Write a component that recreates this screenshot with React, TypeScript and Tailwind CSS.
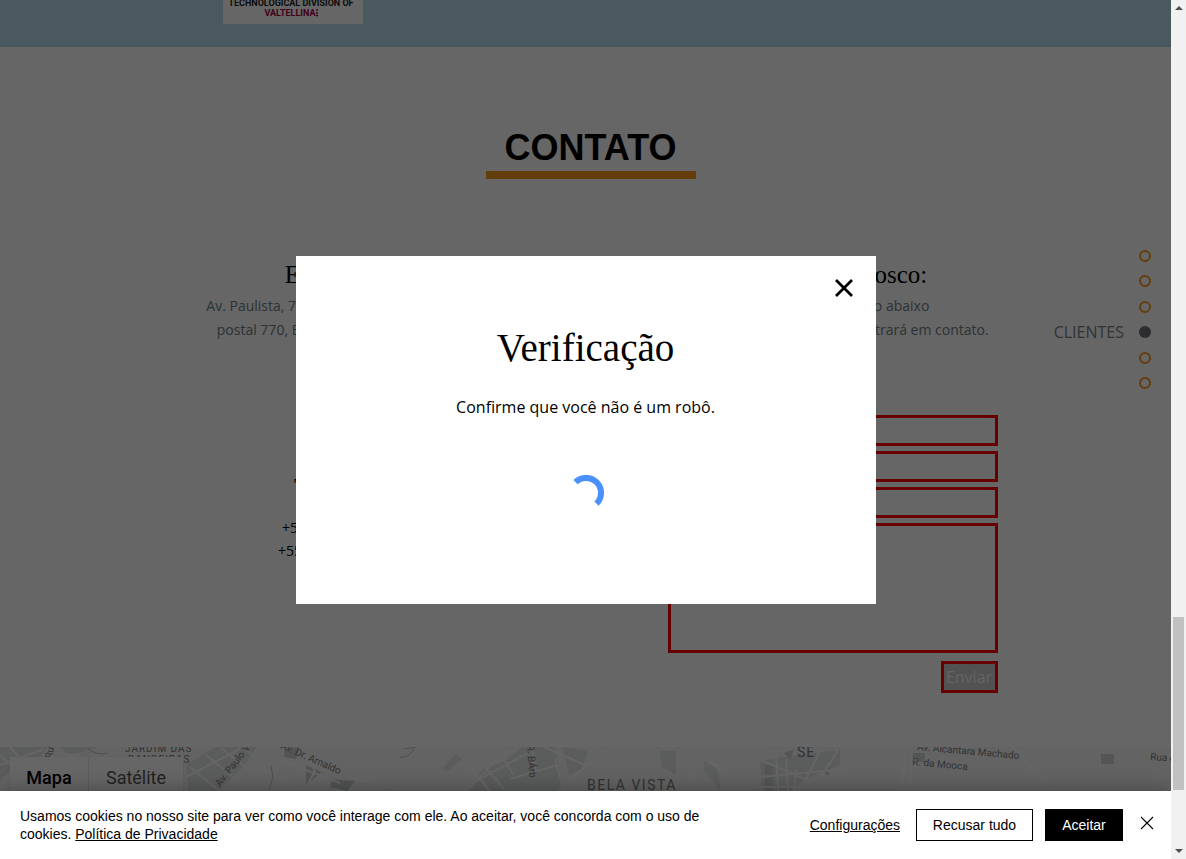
import React from "react";

const sections = ["HOME", "SOBRE", "SERVIÇOS", "CLIENTES", "CONTATO", "MAPA"];

function PartnerStrip() {
  return (
    <section className="h-[47px] bg-[#b9dfef]">
      <div className="mx-auto w-[726px] max-w-full">
        <div className="h-6 w-[140px] bg-white">
          <svg viewBox="0 0 140 24" className="h-6 w-[140px]" fontFamily="Roboto, sans-serif" fontWeight="700" textAnchor="middle">
            <text x="68" y="6" fontSize="9" fill="#222222">TECHNOLOGICAL DIVISION OF</text>
            <text x="67" y="16" fontSize="9" fill="#a8003c">VALTELLINA</text>
            <path d="M93 10h2M93 13h2M93 15.500h2" stroke="#a8003c" strokeWidth="1.500" />
          </svg>
        </div>
      </div>
    </section>
  );
}

const heading = "font-['Liberation_Serif',serif] text-[25px] leading-8 text-black";
const copy = "mt-[3px] whitespace-nowrap text-sm leading-6 text-[#6e8087]";
const field = "block w-full border-[3px] border-[#ff0000] bg-transparent px-2 text-sm";

function Contact() {
  return (
    <section className="h-[700px] pt-[78px]">
      <div className="pl-[10px]">
        <h1 className="mx-auto w-[210px] border-b-8 border-[#fa981f] text-center font-['Liberation_Sans',sans-serif] text-4xl leading-[46px] font-bold text-black">
          CONTATO
        </h1>
      </div>
      <div className="mx-auto mt-20 flex w-[824px] justify-between">
        <div className="w-[324px] text-center">
          <h2 className={heading}>Endereço:</h2>
          <p className={copy}>
            Av. Paulista, 726 - 17º andar, cj. 12 caixa
            <br />
            postal 770, Bela Vista, São Paulo - SP
          </p>
          <h2 className={heading + " mt-[130px]"}>Tel/Fax:</h2>
          <p className="mt-3 text-sm leading-[23px] text-black">
            +55 11 2391 977
            <br />
            +55 11 2391 9770
          </p>
        </div>
        <div className="w-[330px] text-center">
          <h2 className={heading}>Converse conosco:</h2>
          <p className={copy}>
            Preencha o formulário abaixo
            <br />
            e o nosso centro de vendas entrará em contato.
          </p>
          <form className="mt-[73px] flex flex-col gap-[5px]" onSubmit={(e) => e.preventDefault()}>
            <input aria-label="Nome" className={field + " h-[31px]"} />
            <input aria-label="Email" type="email" className={field + " h-[31px]"} />
            <input aria-label="Assunto" className={field + " h-[31px]"} />
            <textarea aria-label="Mensagem" className={field + " h-[130px] resize-none"} />
            <button className="mt-[3px] h-8 w-[57px] self-end border-[3px] border-[#ff0000] bg-[#cdcdcd] text-base leading-6 text-[#f8f8f8]">
              Enviar
            </button>
          </form>
        </div>
      </div>
    </section>
  );
}

function MapSection() {
  return (
    <section className="relative h-[300px] overflow-hidden bg-[#f8f8f8]">
      <svg className="block h-[112px] w-[1171px]" viewBox="0 0 1171 112" aria-label="Mapa">
        <g fill="#e3e6e5">
          <path d="M0 0H48L36 14 10 24 0 34ZM60 0H104L84 8 66 6ZM186 18 216 0H256L245 18 218 44H188Z" />
          <path d="M285 2 300 0 296 12 284 10ZM306 18 322 25 306 38ZM332 32 355 34 347 44 330 40Z" fill="#cdd3d1" />
          <path d="M442 22 456 7 462 12 447 25ZM470 40 483 22 506 13 522 0H555L562 36 557 44H466ZM562 0 588 4 582 22 569 28ZM660 4H676V28L662 20Z" />
          <path d="M704 10 718 24 721 44 704 24ZM760 14 782 10 840 3 840 18 805 32 792 44H762Z" />
        </g>
        <g fill="#d2d7d5">
          <path d="M765 18h8v26h-8ZM784 6l10-4-4 10ZM822 24l8-5-2 10ZM911 6h14v9h-8v-4h-6ZM1101 7h13v10h-13Z" />
        </g>
        <g fill="none" stroke="#fcfcfc" strokeWidth="2">
          <path d="M0 18 44 2M10 0 36 30M0 8 20 26M60 12 104 0M186 30 240 2M190 20 220 44M206 8 236 32M220 0 250 24M240 0 260 12" />
          <path d="M258 20 300 44M282 14 340 36M300 0 315 24 304 44M350 30 400 44" />
          <path d="M466 44 500 10 520 0M472 22 490 44M482 16 504 42M500 8 514 28M476 34 528 6M510 32 558 18M532 0 536 24M555 12 564 44M544 0 590 20M570 32 610 0M700 10 726 26M692 24 700 44" />
          <path d="M758 12 805 32M760 30 846 22M776 4 778 44M786 12 788 44M796 22 794 44M820 4 804 36M838 3 820 32M758 40H890M905 12 902 44M912 0 910 44M1014 0 1050 44" />
        </g>
        <g fill="none" stroke="#c4c4c4" strokeWidth="1">
          <path d="M88 2q10 7 20 4M271 18 273 30 269 44M400 10q8 2 14-8M404 2l12-2" />
        </g>
        <g fontFamily="Roboto, sans-serif" fontSize="10" fill="#808080" stroke="none">
          <text x="125" y="5" letterSpacing="1">JARDIM DAS</text>
          <text x="128" y="16" letterSpacing="1">BANDEIRAS</text>
          <text transform="translate(52 12) rotate(-80)">Rui</text>
          <text transform="translate(220 40) rotate(-52)">Av. Paulo VI</text>
          <text transform="translate(280 1) rotate(24)">Av. Dr. Arnaldo</text>
          <text transform="translate(527 -2) rotate(86)">R. BÁrb</text>
          <text x="587" y="43" fontSize="14" letterSpacing="1.500">BELA VISTA</text>
          <text x="797" y="10" fontSize="14" letterSpacing="1">SE</text>
          <text transform="translate(917 3) rotate(5)">Av. Alcantara Machado</text>
          <text transform="translate(912 18) rotate(5)">R. da Mooca</text>
          <text transform="translate(1150 13) rotate(4)">Rua da</text>
        </g>
      </svg>
      <div className="absolute top-[10px] left-[10px] flex h-[42px] bg-white font-['Roboto',sans-serif] text-lg shadow">
        <button className="w-[79px] border-r border-[#e6e6e6] font-medium text-black">Mapa</button>
        <button className="w-[94px] text-[#565656]">Satélite</button>
      </div>
    </section>
  );
}

function SectionNav() {
  return (
    <nav className="absolute top-[250px] right-5 flex h-[139px] flex-col items-end justify-between">
      {sections.map((name) => {
        const active = name === "CLIENTES";
        return (
          <a key={name} href={"#" + name.toLowerCase()} aria-label={name} className="flex h-3 items-center gap-[15px] text-base text-[#7f7f84]">
            {active && <span>{name}</span>}
            <span className={active ? "size-3 rounded-full bg-[#6f7078]" : "size-3 rounded-full border-2 border-[#fa981f]"} />
          </a>
        );
      })}
    </nav>
  );
}

function VerificationDialog() {
  return (
    <div className="absolute inset-0 flex items-center justify-center bg-black/60">
      <div role="dialog" aria-labelledby="verify-title" className="relative h-[348px] w-[580px] bg-white pt-[68px] text-center text-black">
        <button aria-label="Fechar" className="absolute top-5 right-5 flex size-6 items-center justify-center">
          <svg viewBox="0 0 18 18" className="size-[18px]" stroke="black" strokeWidth="2.800" fill="none">
            <path d="M1 1 17 17M17 1 1 17" />
          </svg>
        </button>
        <h2 id="verify-title" className="font-['Liberation_Serif',serif] text-[39px] leading-12">Verificação</h2>
        <p className="mt-[23px] text-base leading-6">Confirme que você não é um robô.</p>
        <svg viewBox="0 0 36 36" className="mx-auto mt-14 size-9" fill="none" stroke="#4b90ff" strokeWidth="6" role="status" aria-label="Carregando">
          <path d="M7.500 7.200A15 15 0 0 1 28.500 28.700" />
        </svg>
      </div>
    </div>
  );
}

function CookieBanner() {
  return (
    <footer className="absolute inset-x-0 bottom-0 flex h-[68px] items-center bg-white pr-[18px] pl-5 font-['Liberation_Sans',sans-serif] text-sm leading-[18px] text-black shadow-[0_0_20px_rgba(0,0,0,0.35)]">
      <p className="max-w-[700px] min-w-0 flex-1">
        Usamos cookies no nosso site para ver como você interage com ele. Ao aceitar, você concorda com o uso de cookies.{" "}
        <a href="#privacidade" className="underline">Política de Privacidade</a>
      </p>
      <div className="ml-auto flex items-center">
        <button className="mr-4 underline">Configurações</button>
        <button className="mr-3 h-8 w-[117px] border border-black">Recusar tudo</button>
        <button className="mr-[18px] h-8 w-[78px] bg-black text-white">Aceitar</button>
        <button aria-label="Fechar aviso">
          <svg viewBox="0 0 12 12" className="mb-1 size-3 overflow-visible" fill="none" stroke="black" strokeWidth="1.100">
            <path d="M0 0 12 12M12 0 0 12" />
          </svg>
        </button>
      </div>
    </footer>
  );
}

function Scrollbar() {
  return (
    <div aria-hidden="true" className="flex w-[15px] shrink-0 flex-col items-center bg-[#f1f1f1] py-[6px]">
      <svg viewBox="0 0 8 4" className="h-1 w-2"><path d="M4 0 8 4H0Z" fill="#505050" /></svg>
      <div className="grow-[607]" />
      <div className="w-[11px] grow-[173] bg-[#c1c1c1]" />
      <div className="grow-[59]" />
      <svg viewBox="0 0 8 4" className="h-1 w-2"><path d="M0 0H8L4 4Z" fill="#505050" /></svg>
    </div>
  );
}

export default function App() {
  return (
    <div className="flex h-screen bg-white font-['Open_Sans',sans-serif]">
      <div className="relative min-w-0 flex-1 overflow-hidden">
        <main>
          <PartnerStrip />
          <Contact />
          <MapSection />
        </main>
        <SectionNav />
        <VerificationDialog />
        <CookieBanner />
      </div>
      <Scrollbar />
    </div>
  );
}
